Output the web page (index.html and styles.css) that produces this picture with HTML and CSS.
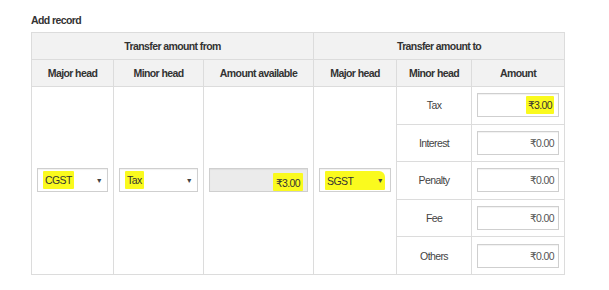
FILE: index.html
```html
<!DOCTYPE html>
<html lang="en">
<head>
  <meta charset="UTF-8" />
  <meta name="viewport" content="width=device-width, initial-scale=1" />
  <title>Add record</title>
  <link rel="stylesheet" href="styles.css">
</head>
<body>
  <div class="container">
    <h4 class="title">Add record</h4>
    <table class="transfer">
      <colgroup>
        <col class="c-major">
        <col class="c-minor">
        <col class="c-avail">
        <col class="c-major2">
        <col class="c-minor2">
        <col class="c-amount">
      </colgroup>
      <thead>
        <tr>
          <th colspan="3">Transfer amount from</th>
          <th colspan="3">Transfer amount to</th>
        </tr>
        <tr>
          <th>Major head</th>
          <th>Minor head</th>
          <th>Amount available</th>
          <th>Major head</th>
          <th>Minor head</th>
          <th>Amount</th>
        </tr>
      </thead>
      <tbody>
        <tr>
          <td rowspan="5" class="side">
            <div class="select"><span class="mark">CGST</span><span class="arrow">&#9660;</span></div>
          </td>
          <td rowspan="5" class="side">
            <div class="select"><span class="mark">Tax</span><span class="arrow">&#9660;</span></div>
          </td>
          <td rowspan="5" class="side">
            <div class="field readonly"><span class="mark low">₹3.00</span></div>
          </td>
          <td rowspan="5" class="side">
            <div class="select"><span class="mark wide">SGST<span class="arrow">&#9660;</span></span></div>
          </td>
          <td class="head">Tax</td>
          <td class="cell"><div class="field"><span class="mark">₹3.00</span></div></td>
        </tr>
        <tr>
          <td class="head">Interest</td>
          <td class="cell"><div class="field">₹0.00</div></td>
        </tr>
        <tr>
          <td class="head">Penalty</td>
          <td class="cell"><div class="field">₹0.00</div></td>
        </tr>
        <tr>
          <td class="head">Fee</td>
          <td class="cell"><div class="field">₹0.00</div></td>
        </tr>
        <tr>
          <td class="head">Others</td>
          <td class="cell"><div class="field">₹0.00</div></td>
        </tr>
      </tbody>
    </table>
  </div>
</body>
</html>
```

FILE: styles.css
```css
body {
  margin: 0;
  font-family: "Liberation Sans", "DejaVu Sans", sans-serif;
  font-size: 10.5px;
  letter-spacing: -0.6px;
  color: #444;
  background: #fff;
}
.container {
  padding: 14px 0 0 31px;
}
.title {
  margin: 0 0 6px 0;
  font-size: 10.5px;
  font-weight: bold;
  color: #333;
  line-height: 12px;
}
.transfer {
  border-collapse: collapse;
  table-layout: fixed;
  width: 533px;
}
.c-major { width: 82px; }
.c-minor { width: 90px; }
.c-avail { width: 110px; }
.c-major2 { width: 83px; }
.c-minor2 { width: 75px; }
.c-amount { width: 93px; }
.transfer th,
.transfer td {
  border: 1px solid #dcdcdc;
  text-align: center;
}
.transfer th {
  background: #f2f2f2;
  color: #333;
  font-weight: bold;
  height: 26px;
  padding: 0;
}
.transfer td {
  padding: 0 5px;
}
.transfer td.head {
  height: 36.6px;
}
.side {
  vertical-align: middle;
}
.select,
.field {
  height: 22px;
  border: 1px solid #cfcfcf;
  background: #fff;
  box-shadow: inset 0 1px 1px rgba(0,0,0,0.06);
  display: flex;
  align-items: center;
  color: #555;
}
.select {
  justify-content: space-between;
  padding: 0 5px;
}
.field {
  justify-content: flex-end;
  padding: 0 4px;
}
.field.readonly {
  background: #ebebeb;
  align-items: flex-end;
}
.mark {
  background: #fafa1e;
  color: #333;
  padding: 3px 2px 3px;
  border-radius: 1px;
}
.mark.low {
  padding: 4px 3px 2px;
}
.mark.wide {
  flex: 1;
  display: flex;
  justify-content: space-between;
  align-items: center;
  padding: 4px 2px 3px;
  border-radius: 1px 6px 1px 1px;
}
.arrow {
  font-size: 7px;
  color: #444;
}
```
